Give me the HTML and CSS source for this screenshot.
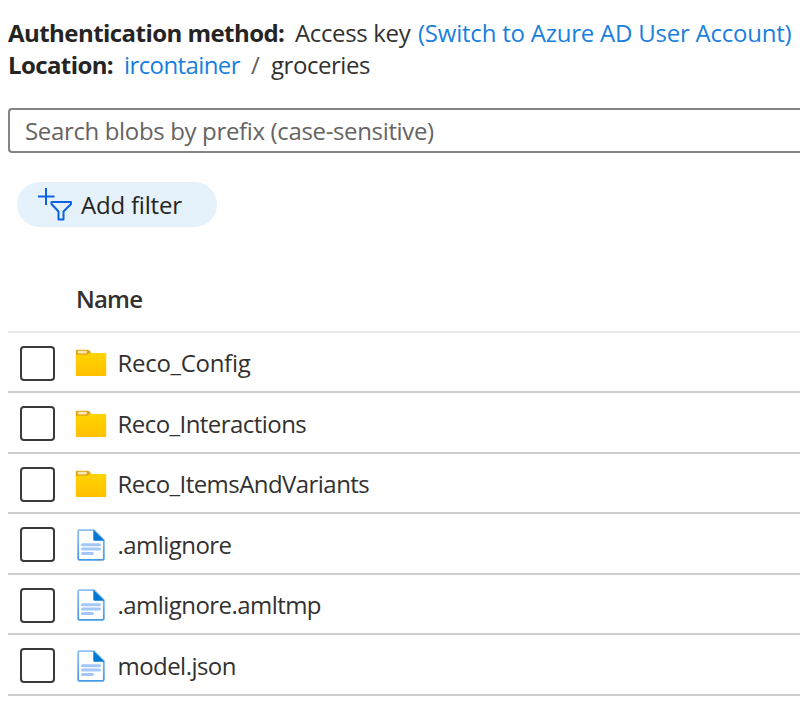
FILE: index.html
```html
<!DOCTYPE html>
<html lang="en">
<head>
<meta charset="utf-8">
<title>Blob container</title>
<link rel="stylesheet" href="styles.css">
</head>
<body>
<svg class="defs" width="0" height="0" aria-hidden="true">
  <defs>
    <linearGradient id="gold" x1="0" y1="0" x2="0" y2="1"><stop offset="0" stop-color="#ffd400"/><stop offset="1" stop-color="#ffc000"/></linearGradient>
    <linearGradient id="edge" x1="0" y1="0" x2="0" y2="1"><stop offset="0" stop-color="#8dbff5"/><stop offset="1" stop-color="#459be5"/></linearGradient>
    <symbol id="folder" viewBox="0 0 32 28">
      <path d="M.8 2.2Q.8 .8 2.2 .8H12.5Q15 1 16 3.8L12.5 7H.8z" fill="#dfa510"/>
      <rect x="2.5" y="1.8" width="9.5" height="2.6" rx="1.3" fill="#f9e6b4"/>
      <path d="M.8 5.8H11.5Q13 5.8 14 4.8L15 4H30.7Q31.2 4 31.2 4.5V26.5Q31.2 27 30.7 27H1.3Q.8 27 .8 26.5z" fill="url(#gold)"/>
    </symbol>
    <symbol id="file" viewBox="0 0 28 32">
      <path d="M2 1.2H17L26.8 11V29.5Q26.8 30.8 25.5 30.8H2.5Q1.2 30.8 1.2 29.5V2Q1.2 1.2 2 1.2z" fill="#fff" stroke="url(#edge)" stroke-width="1.8"/>
      <path d="M16.3 .8L27.3 11.7H17.5Q16.3 11.7 16.3 10.5z" fill="#0078d4"/>
      <path d="M5.5 15.8H22.5M5.5 20H22.5M5.5 24.5H15.5" stroke="#a3c8f8" stroke-width="3" stroke-linecap="round"/>
    </symbol>
  </defs>
</svg>
<main class="panel">
  <section class="summary">
    <p class="line"><strong class="auth">Authentication method:</strong><span class="access">Access key</span><a class="switch">(Switch to Azure AD User Account)</a></p>
    <p class="line"><strong class="loc">Location:</strong><a class="container">ircontainer</a><span class="slash">/</span><span class="groceries">groceries</span></p>
  </section>
  <div class="search"><span class="hint">Search blobs by prefix (case-sensitive)</span></div>
  <button class="filter">
    <svg class="filter-icon" viewBox="0 0 36 34" fill="none" stroke="#0b62e4" stroke-width="2">
      <path d="M9 0V17M1 8.5H17.5"/>
      <path d="M14.5 14H34V16L26.5 23.5V31.5H21.5V23.5L14.5 16z" stroke-linejoin="round"/>
    </svg>
    <span class="filter-label">Add filter</span>
  </button>
  <div class="table">
    <div class="head"><span class="name">Name</span></div>
    <div class="row"><i class="box"></i><svg class="icon folder"><use href="#folder"/></svg><span class="config">Reco_Config</span></div>
    <div class="row"><i class="box"></i><svg class="icon folder"><use href="#folder"/></svg><span>Reco_Interactions</span></div>
    <div class="row"><i class="box"></i><svg class="icon folder"><use href="#folder"/></svg><span>Reco_ItemsAndVariants</span></div>
    <div class="row"><i class="box"></i><svg class="icon file"><use href="#file"/></svg><span>.amlignore</span></div>
    <div class="row"><i class="box"></i><svg class="icon file"><use href="#file"/></svg><span>.amlignore.amltmp</span></div>
    <div class="row"><i class="box"></i><svg class="icon file"><use href="#file"/></svg><span>model.json</span></div>
  </div>
</main>
</body>
</html>
```
FILE: styles.css
```css
* { box-sizing: border-box; }
body {
  margin: 0;
  background: #fff;
  color: #323130;
  font: 24px/32px "Open Sans", "Noto Sans", sans-serif;
  overflow: hidden;
}
.defs { display: block; height: 0; }
.panel { padding: 17px 0 0 8px; white-space: nowrap; }
.line { display: flex; margin: 0; height: 32px; }
strong { font-weight: 700; color: #252423; }
a { color: #1a7fdc; }
.auth { width: 287px; letter-spacing: -0.55px; }
.access { width: 123px; letter-spacing: -0.35px; }
.switch { letter-spacing: -0.22px; }
.loc { width: 116px; letter-spacing: -0.6px; }
.container { width: 127px; letter-spacing: -0.6px; }
.slash { width: 20px; color: #605e5c; }
.groceries { letter-spacing: -0.45px; }
.search {
  display: flex;
  align-items: center;
  height: 45px;
  margin-top: 27px;
  padding-left: 15px;
  border: 2px solid #868482;
  border-right: 0;
  border-radius: 4px 0 0 4px;
  color: #666462;
}
.hint { letter-spacing: -0.35px; }
.filter {
  display: flex;
  align-items: center;
  width: 200px;
  height: 45px;
  margin: 29px 0 0 9px;
  padding: 0 0 0 20px;
  border: 0;
  border-radius: 23px;
  background: #e5f1fb;
  color: #252423;
  font: inherit;
}
.filter-icon { width: 36px; height: 34px; margin-right: 8px; }
.filter-label { letter-spacing: -0.2px; }
.table { margin-top: 42px; }
.head {
  display: flex;
  align-items: center;
  height: 63.5px;
  padding: 0 0 2px 68px;
  border-bottom: 2px solid #edebe9;
  font-weight: 600;
}
.name { letter-spacing: -0.8px; }
.row {
  display: flex;
  align-items: center;
  height: 60.5px;
  padding: 3px 0 0 12px;
  border-bottom: 2px solid #cdcdcd;
}
.row span { letter-spacing: -0.55px; }
.row .config { letter-spacing: -0.3px; }
.box { width: 35px; height: 35px; border: 2px solid #3b3a39; border-radius: 4px; }
.icon { display: block; }
.folder { width: 32px; height: 28px; margin: 0 10.5px 0 20px; }
.file { width: 28px; height: 32px; margin: 0 12.5px 0 22px; }
```
